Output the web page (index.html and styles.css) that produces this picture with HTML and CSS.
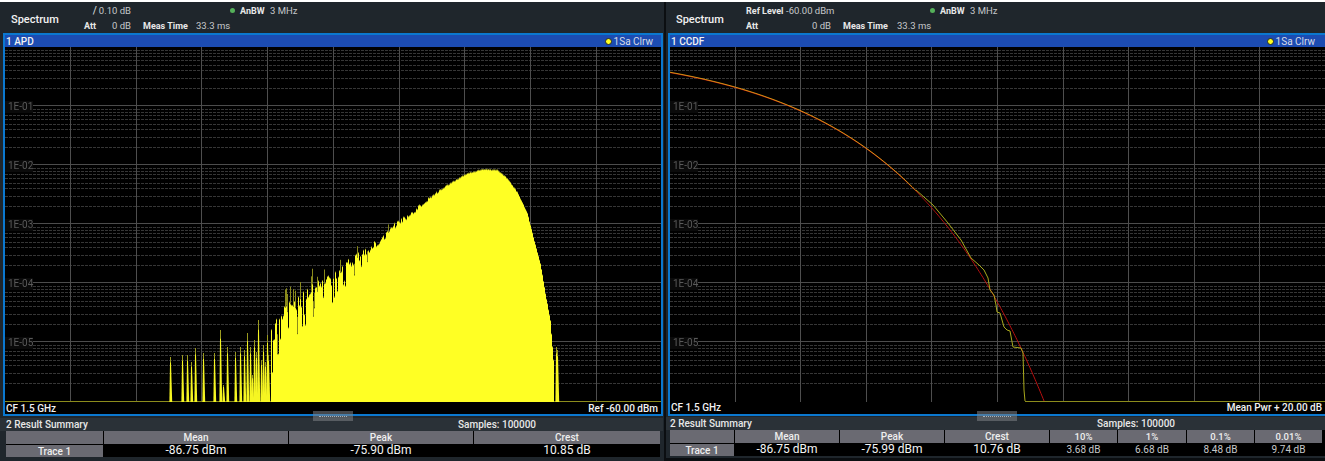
FILE: index.html
```html
<!DOCTYPE html>
<html lang="en">
<head>
    <meta charset="UTF-8">
    <meta name="viewport" content="width=device-width, initial-scale=1.0">
    <title>Spectrum APD / CCDF</title>
    <link rel="stylesheet" href="styles.css">
</head>
<body>
    <div class="screen">
        <!-- left window: APD -->
        <section class="pane pane-apd">
            <header class="hdr">
                <div class="hdr-title">Spectrum</div>
                <div class="hdr-grid">
                    <span class="lbl lbl-right">/</span>
                    <span class="val">0.10 dB</span>
                    <span></span>
                    <span></span>
                    <span class="bw"><i class="led"></i><b>AnBW</b> 3 MHz</span>
                    <span class="lbl">Att</span>
                    <span class="val">0 dB</span>
                    <span class="lbl lbl-meas">Meas Time</span>
                    <span class="val">33.3 ms</span>
                    <span></span>
                </div>
            </header>
            <div class="panel">
                <div class="panel-title">
                    <span>1 APD</span>
                    <span class="trace-tag"><i class="trace-dot"></i>1Sa Clrw</span>
                </div>
                <div class="plot">
                    <canvas id="apdCanvas" width="656" height="355"></canvas>
                    <div class="ylabels">
                        <span>1E-01</span><span>1E-02</span><span>1E-03</span><span>1E-04</span><span>1E-05</span>
                    </div>
                </div>
                <div class="panel-foot">
                    <span>CF 1.5 GHz</span>
                    <span>Ref -60.00 dBm</span>
                </div>
            </div>
            <div class="grip"></div>
            <div class="summary">
                <div class="summary-title">
                    <span class="summary-name">2 Result Summary</span>
                    <span>Samples: 100000</span>
                </div>
                <div class="table">
                    <div class="th"></div>
                    <div class="th">Mean</div>
                    <div class="th">Peak</div>
                    <div class="th">Crest</div>
                    <div class="th">Trace 1</div>
                    <div class="td">-86.75 dBm</div>
                    <div class="td">-75.90 dBm</div>
                    <div class="td">10.85 dB</div>
                </div>
            </div>
        </section>

        <!-- right window: CCDF -->
        <section class="pane pane-ccdf">
            <header class="hdr">
                <div class="hdr-title">Spectrum</div>
                <div class="hdr-grid">
                    <span class="lbl">Ref Level</span>
                    <span class="val">-60.00 dBm</span>
                    <span></span>
                    <span></span>
                    <span class="bw"><i class="led"></i><b>AnBW</b> 3 MHz</span>
                    <span class="lbl">Att</span>
                    <span class="val">0 dB</span>
                    <span class="lbl lbl-meas">Meas Time</span>
                    <span class="val">33.3 ms</span>
                    <span></span>
                </div>
            </header>
            <div class="panel">
                <div class="panel-title">
                    <span>1 CCDF</span>
                    <span class="trace-tag"><i class="trace-dot"></i>1Sa Clrw</span>
                </div>
                <div class="plot">
                    <canvas id="ccdfCanvas" width="656" height="355"></canvas>
                    <div class="ylabels">
                        <span>1E-01</span><span>1E-02</span><span>1E-03</span><span>1E-04</span><span>1E-05</span>
                    </div>
                </div>
                <div class="panel-foot">
                    <span>CF 1.5 GHz</span>
                    <span>Mean Pwr + 20.00 dB</span>
                </div>
            </div>
            <div class="grip"></div>
            <div class="summary">
                <div class="summary-title">
                    <span class="summary-name">2 Result Summary</span>
                    <span>Samples: 100000</span>
                </div>
                <div class="table">
                    <div class="th"></div>
                    <div class="th">Mean</div>
                    <div class="th">Peak</div>
                    <div class="th">Crest</div>
                    <div class="th th-small">10%</div>
                    <div class="th th-small">1%</div>
                    <div class="th th-small">0.1%</div>
                    <div class="th th-small">0.01%</div>
                    <div class="th">Trace 1</div>
                    <div class="td">-86.75 dBm</div>
                    <div class="td">-75.99 dBm</div>
                    <div class="td">10.76 dB</div>
                    <div class="td td-small">3.68 dB</div>
                    <div class="td td-small">6.68 dB</div>
                    <div class="td td-small">8.48 dB</div>
                    <div class="td td-small">9.74 dB</div>
                </div>
            </div>
        </section>
    </div>

    <script src="plot.js"></script>
</body>
</html>
```

FILE: styles.css
```css
html, body {
    margin: 0;
    padding: 0;
    background-color: #fff;
    overflow: hidden;
}

body {
    font-family: Roboto, "Noto Sans", sans-serif;
    color: #e8e8e8;
    font-size: 10px;
}

.screen {
    display: flex;
    align-items: flex-start;
    width: 1325px;
    height: 461px;
    padding-top: 2px;
    box-sizing: border-box;
    background: linear-gradient(#fff 2px, #0b0e11 2px);
}

.pane {
    position: relative;
    background-color: #1f262c;
    box-sizing: border-box;
    overflow: hidden;
}

.pane-apd {
    width: 664px;
    height: 459px;
    padding-left: 3px;
    padding-right: 1px;
}

.pane-ccdf {
    width: 659px;
    height: 456px;
    margin-left: 2px;
    padding-left: 2px;
}

/* top info bar */
.hdr {
    display: flex;
    align-items: center;
    height: 31px;
}

.hdr-title {
    font-size: 11px;
    font-weight: 500;
    color: #f2f2f2;
    padding-left: 8px;
    padding-top: 3px;
}

.pane-apd .hdr-title {
    width: 73px;
}

.pane-ccdf .hdr-title {
    width: 70px;
}

.hdr-grid {
    display: grid;
    grid-template-rows: 15px 15px;
    align-items: center;
    padding-top: 1px;
}

.pane-apd .hdr-grid {
    grid-template-columns: 13px 34px 61px 39px auto;
}

.pane-ccdf .hdr-grid {
    grid-template-columns: 40px 45px 62px 38px auto;
}

.lbl {
    font-weight: 700;
    font-size: 9px;
    white-space: nowrap;
}

.lbl-right {
    text-align: right;
    font-size: 10px;
    font-weight: 400;
}

.lbl-meas {
    padding-left: 12px;
}

.val {
    text-align: right;
    color: #c6c8ca;
    font-size: 9.5px;
    white-space: nowrap;
}

.hdr-grid .val:nth-child(9) {
    text-align: left;
    padding-left: 4px;
}

.bw {
    grid-row: 1;
    grid-column: 5;
    color: #c6c8ca;
    font-size: 9.5px;
    white-space: nowrap;
}

.bw b {
    color: #e8e8e8;
    font-size: 9px;
    margin-right: 3px;
}

.led {
    display: inline-block;
    width: 5px;
    height: 5px;
    border-radius: 50%;
    background-color: #55b05a;
    margin-right: 5px;
    margin-left: -1px;
    vertical-align: 1px;
}

/* blue framed window */
.panel {
    border: 2px solid #0b78cf;
    background-color: #000;
    height: 383px;
    box-sizing: border-box;
    display: flex;
    flex-direction: column;
}

.pane-ccdf .panel {
    width: 670px;
}

.panel-title {
    display: flex;
    justify-content: space-between;
    align-items: center;
    height: 12px;
    background-color: #1c4cb2;
    font-size: 10px;
    font-weight: 500;
    color: #f2f2f2;
    padding: 0 8px 0 1px;
    white-space: nowrap;
}

.pane-ccdf .panel-title {
    padding-right: 21px;
}

.trace-tag {
    font-weight: 400;
    color: #d8dce8;
    display: flex;
    align-items: center;
}

.trace-dot {
    width: 5px;
    height: 5px;
    border-radius: 50%;
    background-color: #ffff20;
    border: 1px solid #20242c;
    margin-right: 2px;
}

.plot {
    position: relative;
    height: 355px;
}

.plot canvas {
    display: block;
}

.ylabels {
    position: absolute;
    left: 0;
    top: 54px;
    display: flex;
    flex-direction: column;
}

.ylabels span {
    height: 59px;
    line-height: 12px;
    width: 25px;
    padding-left: 3px;
    font-size: 10px;
    color: #5a5a5a;
    white-space: nowrap;
    background: linear-gradient(#0a0a0a 12px, transparent 12px);
}

.panel-foot {
    display: flex;
    justify-content: space-between;
    align-items: center;
    height: 12px;
    font-size: 10px;
    font-weight: 500;
    color: #f2f2f2;
    padding: 0 3px 0 1px;
    white-space: nowrap;
}

.pane-ccdf .panel-foot {
    padding-right: 14px;
    padding-bottom: 1px;
    height: 11px;
}

.grip {
    position: absolute;
    top: 409px;
    left: 313px;
    width: 40px;
    height: 10px;
    background-color: rgba(125, 130, 135, 0.55);
}

.pane-ccdf .grip {
    left: 311px;
}

.grip::after {
    content: "";
    position: absolute;
    left: 6px;
    right: 6px;
    top: 5px;
    border-top: 1px dotted #aab0b5;
}

/* result table */
.summary {
    margin-top: 2px;
    margin-left: 1px;
}

.pane-ccdf .summary {
    margin-top: 1px;
}

.summary-title {
    display: flex;
    height: 13px;
    align-items: center;
    background-color: #2a3137;
    margin-left: -4px;
    padding-left: 6px;
    font-size: 10px;
    font-weight: 500;
    color: #e8e8e8;
    white-space: nowrap;
}

.pane-ccdf .summary-title {
    padding-left: 5px;
}

.pane-apd .summary-name {
    width: 452px;
}

.pane-ccdf .summary-name {
    width: 427px;
}

.table {
    display: grid;
    grid-template-rows: 13px 12px;
    gap: 1px 1px;
    background-color: #000;
    margin-left: 1px;
    width: 656px;
    height: 26px;
}

.pane-apd .table {
    grid-template-columns: 97px 184px 184px 186px;
    margin-left: 2px;
    width: 654px;
}

.pane-ccdf .table {
    grid-template-columns: 64px 104px 104px 104px 67px 68px 67px 67px;
}

.th {
    background-color: #6a6a72;
    color: #eee;
    font-size: 10px;
    font-weight: 500;
    text-align: center;
    line-height: 13px;
    overflow: hidden;
}

.th-small {
    font-size: 9.5px;
}

.td {
    color: #f4f4f4;
    font-size: 12px;
    text-align: center;
    line-height: 11px;
    white-space: nowrap;
}

.td-small {
    color: #c6c8ca;
    font-size: 10px;
}
```

FILE: plot.js
```js
const W = 656;
const H = 355;
const DECADE = 59;

// simple seeded noise so the trace looks the same every time
let seed = 17;
function rnd() {
    seed = (seed * 16807) % 2147483647;
    return seed / 2147483647;
}

function hline(ctx, y, color, dash) {
    ctx.strokeStyle = color;
    ctx.setLineDash(dash);
    ctx.beginPath();
    ctx.moveTo(0, y);
    ctx.lineTo(W, y);
    ctx.stroke();
}

function drawGrid(ctx, step) {
    ctx.fillStyle = '#000';
    ctx.fillRect(0, 0, W, H);
    ctx.lineWidth = 1;

    for (let d = 0; d < 6; d++) {
        for (let k = 2; k < 10; k++) {
            const y = Math.round(d * DECADE + DECADE * (1 - Math.log10(k))) + 0.5;
            hline(ctx, y, '#363636', [3, 1]);
        }
        if (d > 0) hline(ctx, Math.round(d * DECADE) - 0.5, '#4c4c4c', []);
    }

    ctx.setLineDash([]);
    ctx.strokeStyle = '#4e4e4e';
    for (let i = 1; i < 10; i++) {
        const x = Math.round(i * step) - 0.5;
        ctx.beginPath();
        ctx.moveTo(x, 0);
        ctx.lineTo(x, H);
        ctx.stroke();
    }
}

function baseline(ctx, from) {
    ctx.strokeStyle = '#8c8c1c';
    ctx.lineWidth = 1;
    ctx.beginPath();
    ctx.moveTo(from, H - 0.5);
    ctx.lineTo(W, H - 0.5);
    ctx.stroke();
}

// envelope of the APD hump, in screenshot pixels
const hump = [
    [270, 343], [277, 327], [283, 313], [293, 307], [303, 300], [310, 293],
    [320, 283], [330, 282], [343, 267], [357, 258], [370, 248], [383, 237],
    [397, 223], [410, 215], [423, 203], [437, 192], [450, 183], [467, 173],
    [483, 169], [497, 170], [507, 178], [517, 192], [527, 213], [533, 237],
    [540, 263], [545, 293], [550, 320], [553, 360], [554, 402]
];

// x, top of the lone spikes on both sides of the hump
const spikes = [
    [170, 357], [182, 355], [187, 355], [191, 362], [195, 348], [203, 353],
    [214, 353], [220, 330], [223, 385], [227, 347], [235, 352], [240, 347],
    [247, 333], [250, 347], [254, 340], [258, 320], [263, 345], [267, 335],
    [244, 350], [252, 375], [261, 360], [256, 352], [265, 362], [268, 355],
    [556, 347], [557, 350]
];

function humpY(x) {
    for (let i = 1; i < hump.length; i++) {
        if (x <= hump[i][0]) {
            const a = hump[i - 1];
            const b = hump[i];
            return a[1] + (b[1] - a[1]) * (x - a[0]) / (b[0] - a[0]);
        }
    }
    return 402;
}

function drawSpike(ctx, x, top) {
    const px = x - 5;
    const y = top - 47;
    ctx.fillStyle = '#9a9a20';
    ctx.fillRect(px, y, 1, H - y);
    // bright wedge, narrow at the top and wider at the floor
    ctx.fillStyle = '#f6f622';
    ctx.beginPath();
    ctx.moveTo(px, y + (H - y) * 0.12);
    ctx.lineTo(px + 1, y + (H - y) * 0.12);
    ctx.lineTo(px + 2.2, H);
    ctx.lineTo(px - 0.6, H);
    ctx.closePath();
    ctx.fill();
}

function drawApd() {
    const ctx = document.getElementById('apdCanvas').getContext('2d');
    drawGrid(ctx, 65.75);
    baseline(ctx, 0);

    spikes.forEach(([x, top]) => drawSpike(ctx, x, top));

    for (let x = 271; x < 555; x++) {
        const base = humpY(x);
        // the trace gets noisier the lower it sits
        const amp = x < 500 ? Math.max(1, (base - 170) / 9) : 1;
        let top = base + (rnd() - 0.6) * amp;
        if (x < 370 && rnd() < 0.14) top += amp * 1.6;
        ctx.fillStyle = '#8a8a1c';
        ctx.fillRect(x - 5, top - 47, 1, 2);
        ctx.fillStyle = '#ffff24';
        ctx.fillRect(x - 5, top - 47 + 1, 1, H - (top - 47));
        // a spike tip now and then, standing clear of the body
        if (x < 400 && rnd() < 0.12) {
            ctx.fillStyle = '#8a8a1c';
            ctx.fillRect(x - 5, top - 47 - amp * 1.1, 1, amp * 1.1);
        }
    }
}

// x across 0..20 dB above the mean, gaussian noise reference
function refY(px) {
    const db = (px / W) * 20;
    const p = Math.exp(-Math.pow(10, db / 10));
    return -Math.log10(p) * DECADE;
}

const measured = [
    [915, 190], [932, 205], [947, 223], [960, 240], [970, 258], [978, 265],
    [983, 270], [987, 278], [989, 290], [993, 295], [995, 305], [996, 312],
    [999, 313], [1003, 327], [1006, 330], [1009, 331], [1012, 347], [1020, 348],
    [1022, 353], [1023, 390], [1024, 401]
];

function drawCcdf() {
    const ctx = document.getElementById('ccdfCanvas').getContext('2d');
    drawGrid(ctx, 65.6);

    ctx.lineWidth = 1;
    ctx.strokeStyle = '#b81010';
    ctx.beginPath();
    for (let px = 0; px <= 375; px++) {
        const y = refY(px);
        if (px === 0) ctx.moveTo(px, y);
        else ctx.lineTo(px, y);
    }
    ctx.stroke();

    // yellow measured trace follows the reference until the samples thin out
    ctx.lineWidth = 0.8;
    ctx.strokeStyle = '#e8b414';
    ctx.beginPath();
    for (let px = 0; px <= 246; px++) {
        const y = refY(px) - 0.4;
        if (px === 0) ctx.moveTo(px, y);
        else ctx.lineTo(px, y);
    }
    ctx.stroke();

    ctx.lineWidth = 1;
    ctx.strokeStyle = '#a8a81c';
    ctx.beginPath();
    measured.forEach(([x, y], i) => {
        if (i === 0) ctx.moveTo(x - 669, y - 47);
        else ctx.lineTo(x - 669, y - 47);
    });
    ctx.stroke();
    baseline(ctx, 355);
}

drawApd();
drawCcdf();
```
